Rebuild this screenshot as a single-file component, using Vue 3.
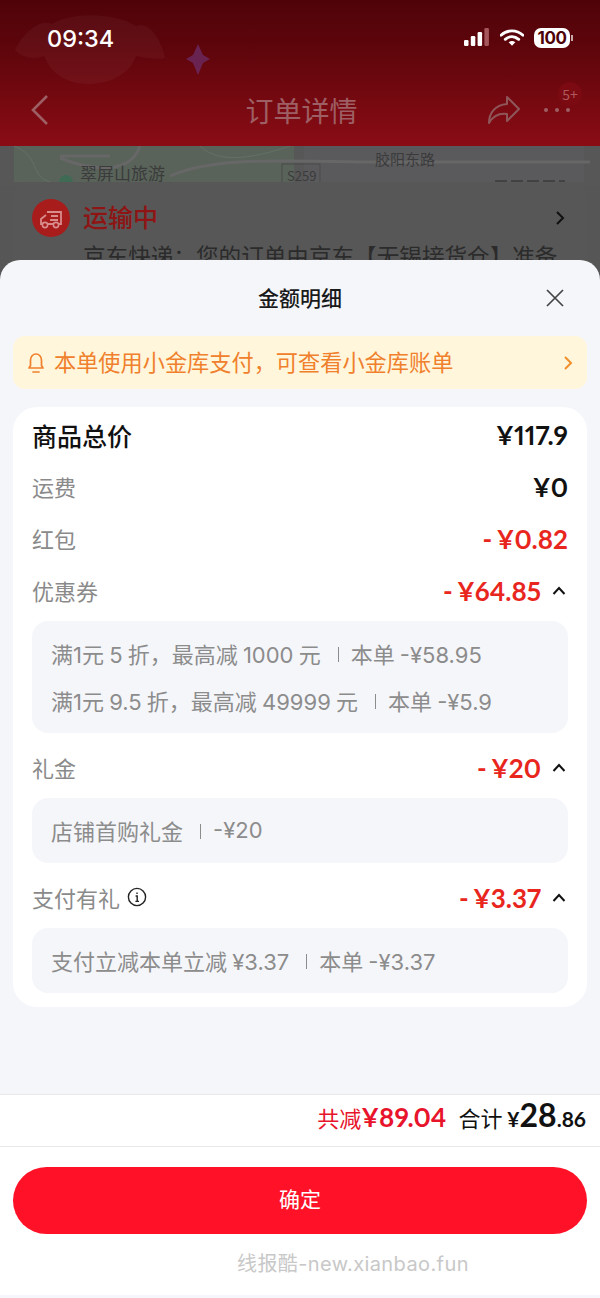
<script setup>
const rows = [
  { label: '运费', value: '¥0' },
  { label: '红包', value: '- ¥0.82', red: true },
  {
    label: '优惠券',
    value: '- ¥64.85',
    red: true,
    open: true,
    lines: [
      ['满1元 5 折\uFF0C最高减 1000 元', '本单 -¥58.95'],
      ['满1元 9.5 折\uFF0C最高减 49999 元', '本单 -¥5.9']
    ]
  },
  {
    label: '礼金',
    value: '- ¥20',
    red: true,
    open: true,
    lines: [['店铺首购礼金', '-¥20']]
  },
  {
    label: '支付有礼',
    value: '- ¥3.37',
    red: true,
    open: true,
    info: true,
    lines: [['支付立减本单立减 ¥3.37', '本单 -¥3.37']]
  }
]
</script>

<template>
  <div class="page">
    <header class="top">
      <svg class="mascot" width="230" height="100" viewBox="0 0 230 100">
        <path d="M15 50 C22 34 40 18 52 24 C70 12 115 12 136 26 C150 20 163 44 165 58 C158 60 145 58 136 56 C130 74 110 84 88 84 C66 84 50 72 44 56 C34 60 22 58 15 50Z" fill="#fff" opacity=".04" />
        <path d="M198 44 L203 55 L210 59 L203 63 L198 75 L193 63 L186 59 L193 55Z" fill="#6b2a63" opacity=".8" />
      </svg>
      <div class="status">
        <span class="time">09:34</span>
        <div class="status-icons">
          <svg width="26" height="20" viewBox="0 0 26 20">
            <rect x="0" y="12" width="4.5" height="6" rx="1.2" fill="#fff" />
            <rect x="6.8" y="8" width="4.5" height="10" rx="1.2" fill="#fff" />
            <rect x="13.6" y="4" width="4.5" height="14" rx="1.2" fill="#fff" />
            <rect x="20.4" y="0" width="4.5" height="18" rx="1.2" fill="#a5565c" />
          </svg>
          <svg width="24" height="18" viewBox="0 0 24 18">
            <path d="M1 6.2 C7.4 .4 16.6 .4 23 6.2" fill="none" stroke="#fff" stroke-width="2.9" stroke-linecap="round" />
            <path d="M5.3 10.3 C9.3 6.8 14.7 6.8 18.7 10.3" fill="none" stroke="#fff" stroke-width="2.9" stroke-linecap="round" />
            <path d="M8.7 13.2 L12 16.8 L15.3 13.2 C13.3 11.6 10.7 11.6 8.7 13.2Z" fill="#fff" />
          </svg>
          <div class="battery"><span>100</span></div>
        </div>
      </div>
      <div class="nav">
        <svg class="back" width="20" height="32" viewBox="0 0 20 32">
          <path d="M17 2 L3 16 L17 30" fill="none" stroke="#9e5f64" stroke-width="2.6" />
        </svg>
        <h1>订单详情</h1>
        <svg class="share" width="34" height="30" viewBox="0 0 34 30">
          <path d="M20 2 L32 14 L20 26 V19 C12 18 6 21 2 28 C2 18 8 10 20 9Z" fill="none" stroke="#8f565a" stroke-width="2" stroke-linejoin="round" />
        </svg>
        <div class="dots">
          <i></i><i></i><i></i>
          <span class="badge">5+</span>
        </div>
      </div>
    </header>

    <section class="behind">
      <div class="map">
        <svg width="600" height="40" viewBox="0 0 600 40">
          <rect x="14" y="0" width="280" height="36" fill="#59635a" />
          <rect x="304" y="0" width="280" height="36" fill="#5a5a5d" />
          <path d="M60 10 H110 M140 0 C130 30 90 24 60 12 M170 30 C210 12 270 14 360 16 H590" fill="none" stroke="#676767" stroke-width="3" />
          <path d="M14 0 C40 10 30 30 50 36 M200 0 C220 20 260 10 290 0" fill="none" stroke="#647066" stroke-width="1" />
          <path d="M59 36 A7 7 0 0 1 73 36Z" fill="#3f6b55" />
          <rect x="282" y="18" width="38" height="20" fill="none" stroke="#4a4a4a" />
          <path d="M495 35 H565" stroke="#2a2a2a" stroke-width="1" stroke-dasharray="12 4" />
        </svg>
        <span class="map-label l1">翠屏山旅游</span>
        <span class="map-label l2">胶阳东路</span>
        <span class="map-label l3">S259</span>
      </div>
      <div class="order">
        <div class="order-head">
          <svg width="38" height="38" viewBox="0 0 38 38">
            <circle cx="19" cy="19" r="19" fill="#a81c1c" />
            <path d="M15 13 H29 V25 H27 M21 25 H16 M10 25 H9 V20 L14 16" fill="none" stroke="#d98c8c" stroke-width="1.8" />
            <circle cx="13" cy="26" r="2.6" fill="none" stroke="#d98c8c" stroke-width="1.6" />
            <circle cx="24" cy="26" r="2.6" fill="none" stroke="#d98c8c" stroke-width="1.6" />
            <path d="M19 17 H26 M18 21 H26" stroke="#d98c8c" stroke-width="1.8" />
          </svg>
          <span class="order-title">运输中</span>
          <svg class="order-arrow" width="10" height="16" viewBox="0 0 10 16">
            <path d="M2 2 L8 8 L2 14" fill="none" stroke="#111" stroke-width="2" />
          </svg>
        </div>
        <p>京东快递&#xFF1A;您的订单由京东【无锡接货仓】准备</p>
      </div>
    </section>

    <div class="sheet">
      <div class="sheet-head">
        <span>金额明细</span>
        <svg class="close" width="20" height="20" viewBox="0 0 20 20">
          <path d="M2 2 L18 18 M18 2 L2 18" stroke="#444" stroke-width="1.7" />
        </svg>
      </div>

      <div class="notice">
        <svg width="18" height="22" viewBox="0 0 18 22">
          <path d="M2 16 H16 L14.5 13.5 V8 A5.5 6 0 0 0 3.5 8 V13.5Z" fill="none" stroke="#f0802c" stroke-width="1.7" stroke-linejoin="round" />
          <path d="M6 20 H12" stroke="#f0802c" stroke-width="1.7" stroke-linecap="round" />
        </svg>
        <span>本单使用小金库支付&#xFF0C;可查看小金库账单</span>
        <svg class="notice-arrow" width="10" height="16" viewBox="0 0 10 16">
          <path d="M2 2 L8 8 L2 14" fill="none" stroke="#f0902c" stroke-width="2" />
        </svg>
      </div>

      <div class="card">
        <div class="total-row">
          <span>商品总价</span>
          <b class="amount">¥117.9</b>
        </div>
        <template v-for="row in rows" :key="row.label">
          <div class="row">
            <span class="row-label">
              {{ row.label }}
              <svg v-if="row.info" width="20" height="20" viewBox="0 0 20 20">
                <circle cx="10" cy="10" r="8.6" fill="none" stroke="#222" stroke-width="1.4" />
                <path d="M10 5.4 V7 M8.6 9 H10.2 V14.4 M8.4 14.4 H12" fill="none" stroke="#222" stroke-width="1.4" />
              </svg>
            </span>
            <span class="row-value">
              <b class="amount" :class="{ red: row.red }">{{ row.value }}</b>
              <svg v-if="row.open" width="14" height="10" viewBox="0 0 14 10">
                <path d="M1.5 8 L7 2 L12.5 8" fill="none" stroke="#111" stroke-width="2" />
              </svg>
            </span>
          </div>
          <div v-if="row.lines" class="detail">
            <div v-for="line in row.lines" :key="line[0]" class="detail-line">
              <span>{{ line[0] }}</span>
              <i class="sep"></i>
              <span>{{ line[1] }}</span>
            </div>
          </div>
        </template>
      </div>

      <div class="summary">
        <span class="saved">共减<b>¥89.04</b></span>
        <span class="sum">合计 <b class="yen">¥</b><b class="big">28</b><b class="cents">.86</b></span>
      </div>

      <div class="actions">
        <button class="confirm">确定</button>
        <div class="watermark">线报酷-new.xianbao.fun</div>
      </div>
    </div>
  </div>
</template>

<style scoped>
.page {
  position: relative;
  width: 600px;
  height: 1298px;
  overflow: hidden;
  background: #565656;
  font-family: "Noto Sans CJK SC", "Noto Sans", sans-serif;
}

.top {
  position: relative;
  height: 146px;
  box-sizing: border-box;
  padding-top: 20px;
  background: linear-gradient(#4f0309 0%, #5c050b 30%, #8a0c15 100%);
}

.mascot {
  position: absolute;
  left: 0;
  top: 0;
}

.status {
  position: relative;
  display: flex;
  justify-content: space-between;
  align-items: center;
  height: 36px;
  padding: 0 30px 0 47px;
}

.time {
  color: #fff;
  font-family: Inter, sans-serif;
  font-size: 23.5px;
  font-weight: 500;
}

.status-icons {
  display: flex;
  align-items: center;
  gap: 10px;
}

.battery {
  position: relative;
  width: 36px;
  height: 20px;
  border-radius: 7px;
  background: #fff;
  display: flex;
  align-items: center;
  justify-content: center;
}

.battery::after {
  content: "";
  position: absolute;
  right: -3px;
  top: 7px;
  width: 2px;
  height: 6px;
  background: #c9a8aa;
}

.battery span {
  color: #4f0309;
  font-family: Inter, sans-serif;
  font-size: 17px;
  font-weight: 700;
  letter-spacing: -0.5px;
}

.nav {
  position: relative;
  display: flex;
  align-items: center;
  height: 60px;
  margin-top: 24px;
  padding: 0 30px;
}

.nav h1 {
  flex: 1;
  margin: 0;
  padding-left: 66px;
  text-align: center;
  color: #9e5f64;
  font-size: 28px;
  font-weight: 400;
  line-height: 56px;
}

.dots {
  position: relative;
  display: flex;
  gap: 7px;
  margin-left: 23px;
}

.dots i {
  width: 4px;
  height: 4px;
  border-radius: 50%;
  background: #9e5f64;
}

.badge {
  position: absolute;
  left: 14px;
  top: -26px;
  width: 24px;
  height: 24px;
  border-radius: 50%;
  background: #7c0a12;
  color: #b0595d;
  font-size: 14px;
  line-height: 24px;
  text-align: center;
}

.behind {
  position: relative;
  height: 1152px;
}

.map {
  position: relative;
  height: 40px;
  background: #575757;
}

.map svg {
  display: block;
}

.map-label {
  position: absolute;
  color: #3b3b3b;
  line-height: 18px;
}

.l1 { left: 80px; top: 18px; font-size: 17px; }
.l2 { left: 375px; top: 4px; font-size: 15px; }
.l3 { left: 287px; top: 21px; font-size: 13px; }

.order {
  position: absolute;
  left: 13px;
  right: 13px;
  top: 36px;
  height: 120px;
  padding: 0 19px;
  border-radius: 14px 14px 0 0;
  background: #575757;
}

.order-head {
  display: flex;
  align-items: center;
  gap: 13px;
  height: 38px;
  margin-top: 17px;
}

.order-title {
  padding-bottom: 4px;
  color: #8f1414;
  font-size: 25px;
  font-weight: 500;
}

.order-arrow {
  margin-left: auto;
  margin-right: 3px;
}

.order p {
  margin: 2px 0 0 51px;
  width: 480px;
  overflow: hidden;
  white-space: nowrap;
  color: #2b2b2b;
  font-size: 22.6px;
}

.sheet {
  position: absolute;
  left: 0;
  right: 0;
  top: 260px;
  bottom: 0;
  display: flex;
  flex-direction: column;
  border-radius: 20px 20px 0 0;
  background: #f5f6fa;
}

.sheet-head {
  position: relative;
  height: 76px;
  box-sizing: border-box;
  padding-bottom: 2px;
  flex: none;
  display: flex;
  align-items: center;
  justify-content: center;
  color: #1a1a1a;
  font-size: 21px;
  font-weight: 500;
}

.close {
  position: absolute;
  right: 35px;
  top: 28px;
}

.notice {
  flex: none;
  display: flex;
  align-items: center;
  height: 53px;
  margin: 0 13px;
  padding: 0 14px;
  gap: 9px;
  border-radius: 12px;
  background: #fff6db;
  color: #f0802c;
  font-size: 22.2px;
}

.notice > span {
  padding-bottom: 4px;
}

.notice-arrow {
  margin-left: auto;
}

.card {
  flex: none;
  margin: 18px 13px 0;
  padding: 11px 19px 14px;
  height: 600px;
  box-sizing: border-box;
  border-radius: 24px;
  background: #fff;
}

.total-row {
  display: flex;
  justify-content: space-between;
  align-items: center;
  box-sizing: border-box;
  height: 38px;
  padding-bottom: 4px;
  margin-bottom: 14px;
  color: #111;
  font-size: 25px;
  font-weight: 500;
}

.amount {
  font-family: Lato, sans-serif;
  font-size: 26px;
  font-weight: 700;
  font-variant-numeric: proportional-nums;
  word-spacing: -2px;
  color: #111;
}

.amount.red {
  color: #e8261e;
}

.row {
  display: flex;
  justify-content: space-between;
  align-items: center;
  box-sizing: border-box;
  height: 38px;
  padding-bottom: 4px;
  margin-bottom: 14px;
}

.row-label {
  display: flex;
  align-items: center;
  gap: 7px;
  margin-bottom: 2px;
  color: #8a8a8a;
  font-size: 22px;
}

.row-value {
  display: flex;
  align-items: center;
  gap: 11px;
}

.row-value svg {
  margin-right: 2px;
}

.detail {
  margin: -5px 0 18px;
  padding: 11px 19px;
  border-radius: 16px;
  background: #f5f6fa;
  color: #8c8c8c;
  font-family: Inter, "Noto Sans CJK SC", sans-serif;
  font-size: 22px;
  word-spacing: -1px;
}

.detail:last-child {
  margin-bottom: 0;
}

.detail-line {
  display: flex;
  align-items: center;
  box-sizing: border-box;
  height: 43px;
  padding-bottom: 2px;
}

.detail-line + .detail-line {
  margin-top: 4px;
}

.sep {
  width: 1px;
  height: 15px;
  margin: 3px 12px 0 17px;
  background: #8c8c8c;
}

.summary {
  flex: none;
  display: flex;
  justify-content: flex-end;
  align-items: baseline;
  gap: 12px;
  margin-top: 87px;
  padding: 0 14px 0 0;
  height: 53px;
  box-sizing: border-box;
  border-top: 1px solid #e8e8ea;
  border-bottom: 1px solid #e8e8ea;
  background: #fff;
  font-size: 22px;
}

.saved {
  color: #e8142c;
}

.saved b {
  font-family: Lato, sans-serif;
  font-size: 26px;
  font-weight: 700;
  font-variant-numeric: proportional-nums;
}

.sum {
  color: #111;
}

.sum b {
  font-family: Lato, sans-serif;
  font-weight: 700;
}

.yen {
  font-size: 21px;
}

.big {
  font-size: 32px;
}

.cents {
  font-size: 21px;
}

.actions {
  flex: 1;
  padding: 20px 13px 0;
  background: #fff;
  border-bottom: 3px solid #f5f6fa;
}

.confirm {
  display: block;
  width: 100%;
  height: 67px;
  padding-bottom: 6px;
  border: none;
  border-radius: 34px;
  background: #ff1228;
  color: #fff;
  font-family: inherit;
  font-size: 21px;
}

.watermark {
  margin: 15px 0 0 224px;
  color: #c8c8c8;
  font-family: Inter, "Noto Sans CJK SC", sans-serif;
  font-size: 20px;
  letter-spacing: .4px;
  line-height: 30px;
}
</style>
